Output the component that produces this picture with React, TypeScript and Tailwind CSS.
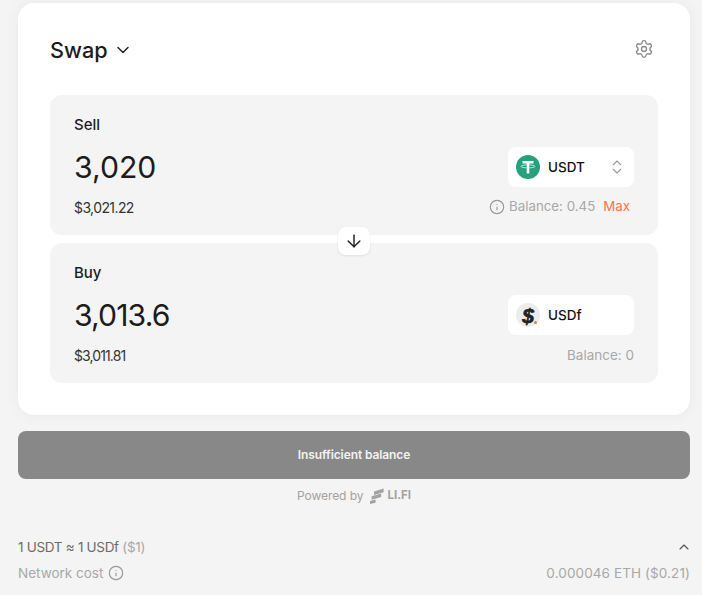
import { ChevronDown, ChevronUp, ChevronsUpDown, Info, Settings, ArrowDown } from "lucide-react";

function TetherIcon() {
  return (
    <svg width="24" height="24" viewBox="0 0 24 24" aria-hidden="true">
      <circle cx="12" cy="12" r="12" fill="#26a17b" />
      <path d="M6.5 6h11v2.6h-4.2v10h-2.6v-10H6.5z" fill="#fff" />
      <ellipse cx="12" cy="11.4" rx="7" ry="1.5" fill="none" stroke="#fff" strokeWidth="0.9" opacity="0.75" />
    </svg>
  );
}

function DollarIcon() {
  return (
    <div className="relative w-6 h-6 rounded-full bg-[#ececec] flex items-center justify-center">
      <span className="text-[21px] leading-none font-bold text-[#222] italic font-['Liberation_Sans',sans-serif] [-webkit-text-stroke:0.7px_#222]">$</span>
      <span className="absolute right-[3px] bottom-[3px] w-[3px] h-[3px] rounded-full bg-[#f4754a]" />
    </div>
  );
}

function LifiLogo() {
  return (
    <svg width="16" height="16" viewBox="0 0 16 16" fill="#a3a3a3" aria-hidden="true">
      <path d="M5 3.4 14.6 0.6v3.6L5 7z" />
      <path d="M2.6 8.2 12.2 5.6v3.5L2.6 11.8z" />
      <path d="M1 13 6.6 11.4v3.4L1 16z" />
    </svg>
  );
}

function TokenPanel({ label, amount, amountClass, usd, usdClass, icon, symbol, chevrons, balance }: { label: string; amount: string; amountClass: string; usd: string; usdClass: string; icon: React.ReactNode; symbol: string; chevrons?: boolean; balance: React.ReactNode }) {
  return (
    <div className="h-[140px] rounded-xl bg-[#f4f4f4] pl-6 pr-6 pt-[20px]">
      <div className="text-[15px] leading-[20px] font-medium text-[#1c1c1c]">{label}</div>
      <div className="flex items-center justify-between mt-[12px] h-[40px]">
        <span className={`text-[30.2px] leading-[40px] text-[#1c1c1c] ${amountClass}`}>{amount}</span>
        <div className="w-[126px] h-[40px] rounded-lg bg-white flex items-center pl-2 pr-[8px]">
          {icon}
          <span className="ml-2 flex-1 text-[13.5px] font-medium text-[#111]">{symbol}</span>
          {chevrons && <ChevronsUpDown size={18} strokeWidth={1.5} className="text-[#999]" />}
        </div>
      </div>
      <div className="flex items-center justify-between mt-[10px] h-[20px]">
        <span className={`text-[14px] text-[#333] ${usdClass}`}>{usd}</span>
        {balance}
      </div>
    </div>
  );
}

export default function App() {
  return (
    <div className="w-[702px] h-[595px] overflow-hidden bg-[#f4f4f4] pl-[18px] pr-[12px] pt-[3px] font-['Inter',sans-serif]">
      <div className="h-[412px] rounded-2xl bg-white shadow-[0_0_16px_rgba(0,0,0,0.05)] px-8 pt-8">
        <div className="flex items-center justify-between h-[30px]">
          <div className="flex items-center gap-[5px]">
            <span className="text-[21.7px] leading-[30px] font-medium text-[#1c1c1c]">Swap</span>
            <ChevronDown size={20} strokeWidth={1.75} className="text-[#222]" />
          </div>
          <Settings size={20} strokeWidth={1.6} className="text-[#8a8a8a] mr-[4px] -mt-[2px]" />
        </div>
        <div className="relative flex flex-col gap-2 mt-[30px]">
          <TokenPanel
            label="Sell"
            amount="3,020"
            amountClass=""
            usd="$3,021.22"
            usdClass="tracking-[-0.6px]"
            icon={<TetherIcon />}
            symbol="USDT"
            chevrons
            balance={
              <div className="flex items-center text-[13.3px] text-[#a8a8a8] pr-1">
                <Info size={16} strokeWidth={1.75} className="mr-1 text-[#999]" />
                <span>Balance: 0.45</span>
                <span className="ml-2 text-[#f4754a]">Max</span>
              </div>
            }
          />
          <TokenPanel
            label="Buy"
            amount="3,013.6"
            amountClass="tracking-[-0.9px]"
            usd="$3,011.81"
            usdClass="tracking-[-0.9px]"
            icon={<DollarIcon />}
            symbol="USDf"
            balance={<span className="text-[13.5px] text-[#a8a8a8]">Balance: 0</span>}
          />
          <div className="absolute left-[288px] top-[132px] w-8 h-[28px] rounded-lg bg-white shadow-[0_1px_3px_rgba(0,0,0,0.08)] flex items-center justify-center">
            <ArrowDown size={20} strokeWidth={1.75} className="text-[#222]" />
          </div>
        </div>
      </div>
      <div className="mt-4 h-12 rounded-lg bg-[#888888] flex items-center justify-center text-[12px] font-semibold text-[#f2f2f2] tracking-[-0.1px]">
        Insufficient balance
      </div>
      <div className="mt-[9px] flex items-center justify-center h-4 text-[12px] text-[#a3a3a3]">
        <span className="tracking-[-0.05px]">Powered by</span>
        <span className="ml-[5px]"><LifiLogo /></span>
        <span className="ml-[3px] font-bold text-[11.5px]">LI.FI</span>
      </div>
      <div className="mt-[33px] flex items-center justify-between h-5 text-[13.5px]">
        <span className="text-[#6b6b6b] tracking-[-0.3px]">1 USDT ≈ 1 USDf <span className="text-[#a8a8a8]">($1)</span></span>
        <ChevronUp size={16} strokeWidth={1.75} className="text-[#555] mr-[-2px]" />
      </div>
      <div className="mt-[6px] flex items-center justify-between h-5 text-[13.5px] text-[#a8a8a8]">
        <span className="flex items-center">Network cost<Info size={16} strokeWidth={1.75} className="ml-[5px] text-[#999]" /></span>
        <span className="tracking-[0.1px]">0.000046 ETH ($0.21)</span>
      </div>
    </div>
  );
}
